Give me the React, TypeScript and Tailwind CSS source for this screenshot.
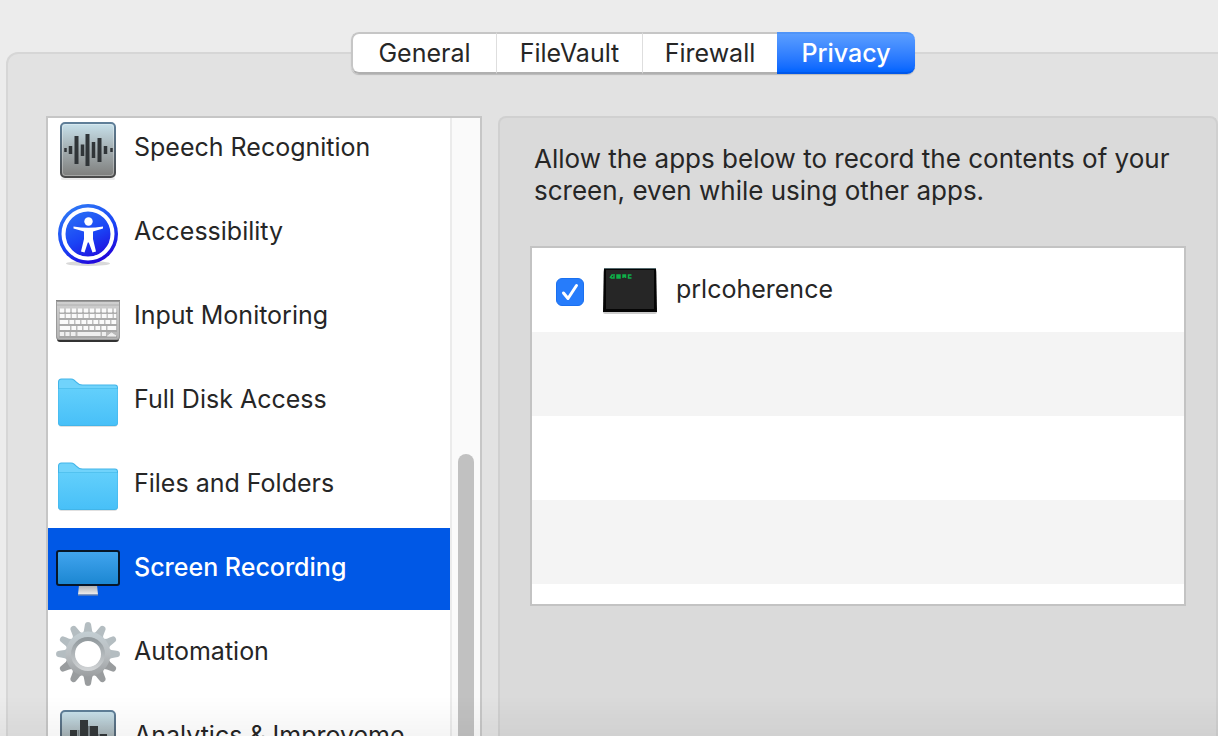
import { useState } from "react";
import clsx from "clsx";

const GEAR_TEETH = [0, 30, 60, 90, 120, 150, 180, 210, 240, 270, 300, 330];

const KEY_ROWS = [
  { y: 25.5, keys: "4 2" },
  { y: 31, keys: "4.5 1.5" },
  { y: 37, keys: "8 1.5 4.5 1.5 4.5 1.5 4.5 1.5 4.5 1.5 4.5 1.5 4.5 1.5 4.5 1.5" },
  { y: 43, keys: "10 1.5 4.5 1.5 4.5 1.5 4.5 1.5 4.5 1.5 4.5 1.5 4.5 1.5 9 1" },
];

function SpeechIcon() {
  return (
    <svg viewBox="0 0 64 64" className="size-16 shrink-0" aria-hidden="true">
      <defs>
        <linearGradient id="speech" x1="0" y1="0" x2="0" y2="1">
          <stop offset="0" stopColor="#c8e2ec" />
          <stop offset="0.5" stopColor="#a3adb0" />
          <stop offset="1" stopColor="#7d7d7b" />
        </linearGradient>
        <linearGradient id="speechEdge" x1="0" y1="0" x2="0" y2="1">
          <stop offset="0" stopColor="#5f7f99" />
          <stop offset="1" stopColor="#4a4a4a" />
        </linearGradient>
      </defs>
      <rect x="5" y="60" width="54" height="3" rx="1.5" fill="#000" opacity="0.08" />
      <rect x="5" y="6" width="54" height="54" rx="4" fill="url(#speech)" stroke="url(#speechEdge)" strokeWidth="2" />
      <rect x="6.5" y="7.5" width="51" height="51" rx="3" fill="none" stroke="#fff" strokeOpacity="0.3" />
      <g stroke="#303538">
        <path d="M9.5 31v4M55.5 31v4" strokeWidth="2.5" />
        <path d="M14.5 29v8M49.5 29v8M26.5 27.5v11.5" strokeWidth="3.5" />
        <path d="M20.500 19v28M31.500 17v32M43.500 21v24" strokeWidth="4" />
        <path d="M37.500 25v16" strokeWidth="3.5" />
      </g>
    </svg>
  );
}

function AccessibilityIcon() {
  return (
    <svg viewBox="0 0 64 64" className="size-16 shrink-0 overflow-visible" aria-hidden="true">
      <defs>
        <linearGradient id="access" x1="0.2" y1="0" x2="0.7" y2="1">
          <stop offset="0" stopColor="#2f7bf5" />
          <stop offset="0.55" stopColor="#1a44f5" />
          <stop offset="1" stopColor="#2200d8" />
        </linearGradient>
      </defs>
      <ellipse cx="32" cy="62.5" rx="22" ry="2.5" fill="#000" opacity="0.15" />
      <circle cx="32" cy="33" r="30" fill="url(#access)" />
      <circle cx="32" cy="33" r="24.5" fill="none" stroke="#fff" strokeWidth="4" />
      <circle cx="32.5" cy="20.5" r="4.2" fill="#fff" />
      <path
        d="M17.5 25.5Q32 28 47 25.5L47 27.5L37 30.5L37 38L40 50.500L36.500 51.500L32.800 41.500L31.800 41.500L28.500 51.500L25 50.500L28 38L28 30.500L17.500 27.500Z"
        fill="#fff"
      />
    </svg>
  );
}

function KeyboardIcon() {
  return (
    <svg viewBox="0 0 64 64" className="size-16 shrink-0" aria-hidden="true">
      <defs>
        <linearGradient id="keyboard" x1="0" y1="0" x2="0" y2="1">
          <stop offset="0" stopColor="#cfcfcf" />
          <stop offset="1" stopColor="#b4b4b4" />
        </linearGradient>
      </defs>
      <path d="M1 50h62v4q0 3-3 3H4q-3 0-3-3z" fill="#333" />
      <path d="M0 15h64v37q0 3-3 3H3q-3 0-3-3z" fill="#9a9a9a" />
      <path d="M1 17h62v34q0 3-3 3H4q-3 0-3-3z" fill="url(#keyboard)" />
      <path d="M0 15.5h64" stroke="#858585" />
      <path d="M1 20h62" stroke="#b0b0b0" />
      <g stroke="#959595" strokeWidth="1">
        <path d="M3 28h58M3 34h58M3 40h58M3 46h58M3 52h58" />
      </g>
      <g stroke="#fafafa" strokeWidth="3.8">
        {KEY_ROWS.map(({ y, keys }) => (
          <path key={y} d={`M4 ${y}H60`} strokeDasharray={keys} />
        ))}
        <path d="M4 49h4M9.5 49h4M15 49h4.500M21.500 49h23M46 49h4" stroke="#efefef" />
        <path d="M51.500 51L55.500 48L60 51z" fill="#efefef" stroke="#efefef" strokeWidth="1" />
      </g>
    </svg>
  );
}

function FolderIcon() {
  return (
    <svg viewBox="0 0 64 64" className="size-16 shrink-0" aria-hidden="true">
      <defs>
        <linearGradient id="folder" x1="0" y1="0" x2="0" y2="1">
          <stop offset="0" stopColor="#62cffb" />
          <stop offset="1" stopColor="#48c0f8" />
        </linearGradient>
      </defs>
      <rect x="3" y="54" width="58" height="4" rx="2" fill="#000" opacity="0.12" />
      <path
        d="M2 13q0-3.500 3.500-3.500H15q2 0 3.500 1.200L21 13q2.500 2.500 5.500 2.500H59q3 0 3 3V54q0 3-3 3H5q-3 0-3-3z"
        fill="#42b5e9"
      />
      <path d="M3 13q0-2.500 2.500-2.500H15q2 0 3 1.200L20.500 14q2.500 2.500 5.500 2.500H59q2 0 2 2V20H3z" fill="#70d3fb" />
      <path d="M2.500 20h59v33q0 3-3 3H5.500q-3 0-3-3z" fill="url(#folder)" />
      <path d="M3 19.500h58" stroke="#52c2ef" />
    </svg>
  );
}

function DisplayIcon() {
  return (
    <svg viewBox="0 0 64 64" className="size-16 shrink-0" aria-hidden="true">
      <defs>
        <linearGradient id="display" x1="0" y1="0" x2="0" y2="1">
          <stop offset="0" stopColor="#41a4ee" />
          <stop offset="1" stopColor="#1c87d2" />
        </linearGradient>
        <linearGradient id="stand" x1="0" y1="0" x2="0" y2="1">
          <stop offset="0" stopColor="#a9abad" />
          <stop offset="1" stopColor="#eeeeee" />
        </linearGradient>
      </defs>
      <path d="M23 48h18l1 9.500H22z" fill="url(#stand)" />
      <path d="M22 58h20" stroke="#8a8f99" />
      <rect x="0" y="13" width="64" height="36" rx="3" fill="#071629" />
      <rect x="2" y="15" width="60" height="32" rx="1" fill="url(#display)" />
    </svg>
  );
}

function GearIcon() {
  return (
    <svg viewBox="0 0 64 64" className="size-16 shrink-0 overflow-visible" aria-hidden="true">
      <defs>
        <linearGradient id="gear" x1="0" y1="0" x2="0" y2="1">
          <stop offset="0" stopColor="#c3ced3" />
          <stop offset="0.5" stopColor="#b9bec1" />
          <stop offset="1" stopColor="#9c9fa1" />
        </linearGradient>
        <linearGradient id="gearRing" x1="0" y1="0" x2="0" y2="1">
          <stop offset="0" stopColor="#929a9e" />
          <stop offset="1" stopColor="#cfd2d4" />
        </linearGradient>
      </defs>
      {GEAR_TEETH.map((angle) => (
        <path
          key={angle}
          d="M26 13Q28.500 10 28.500 6L29 3Q29.500 1 32 1T35 3L35.500 6Q35.500 10 38 13Z"
          transform={`rotate(${angle} 32 33)`}
          fill={angle > 90 && angle < 270 ? "#999c9e" : "#b4bdc1"}
        />
      ))}
      <path
        fill="url(#gear)"
        fillRule="evenodd"
        d="M32 10.500a22.500 22.500 0 1 0 0 45a22.500 22.500 0 1 0 0-45M32 19.500a13.500 13.500 0 1 1 0 27a13.500 13.500 0 1 1 0-27"
      />
      <circle cx="32" cy="33" r="15" fill="none" stroke="url(#gearRing)" strokeWidth="4" />
    </svg>
  );
}

function AnalyticsIcon() {
  return (
    <svg viewBox="0 0 64 64" className="size-16 shrink-0" aria-hidden="true">
      <rect x="5" y="6" width="54" height="54" rx="4" fill="url(#speech)" stroke="url(#speechEdge)" strokeWidth="2" />
      <path d="M14 25h7v29h-7zM24 15h8v39h-8zM34 21h8v33h-8zM44 29h7v25h-7z" fill="#34383a" />
      <path d="M22.500 25v29M33 21v33M43 29v25" stroke="#7c8589" strokeWidth="2" />
    </svg>
  );
}

function TerminalIcon() {
  return (
    <svg viewBox="0 0 56 48" className="h-12 w-14 shrink-0" aria-hidden="true">
      <rect x="1" y="4" width="54" height="44" rx="2" fill="#000" opacity="0.2" />
      <path d="M2 2h52L55 46H1z" fill="#050505" />
      <path d="M2 2.500h52" stroke="#54696d" />
      <path d="M4 4h48v39H4z" fill="#262626" />
      <path
        d="M8 12l2-3h3M9 12h3v-2M15 12V9h3v3zM15 10.500h3M21 12V9h2.500v3M21 10.500h3M29.500 9h-3v3h3"
        fill="none"
        stroke="#0fb048"
        strokeWidth="1.5"
      />
    </svg>
  );
}

const tabs = [
  { name: "General", width: "w-[145px]" },
  { name: "FileVault", width: "w-[146px]" },
  { name: "Firewall", width: "w-[135px]" },
  { name: "Privacy", width: "w-[138px]" },
];

const services = [
  { name: "Speech Recognition", icon: SpeechIcon },
  { name: "Accessibility", icon: AccessibilityIcon },
  { name: "Input Monitoring", icon: KeyboardIcon },
  { name: "Full Disk Access", icon: FolderIcon },
  { name: "Files and Folders", icon: FolderIcon },
  { name: "Screen Recording", icon: DisplayIcon },
  { name: "Automation", icon: GearIcon },
  { name: "Analytics & Improveme", icon: AnalyticsIcon },
];

function TabBar() {
  const [active, setActive] = useState("Privacy");

  return (
    <div role="tablist" className="relative z-10 flex h-[42px] rounded-lg bg-white shadow-[0_1px_1px_#0000002e]">
      {tabs.map(({ name, width }) => (
        <button
          key={name}
          type="button"
          role="tab"
          aria-selected={active === name}
          onClick={() => setActive(name)}
          className={clsx(
            "flex items-center justify-center border-y-2 first:rounded-l-lg first:border-l-2 last:rounded-r-lg",
            width,
            active === name
              ? "border-t-[#4f94f8] border-b-[#0058ea] bg-linear-to-b from-[#5a9dff] to-[#0064ff] font-medium text-white"
              : "border-[#c6c6c6] border-b-[#b0b0b0] text-[#262626] not-first:border-l not-first:border-l-[#dedede]"
          )}
        >
          {name}
        </button>
      ))}
    </div>
  );
}

function ServiceList() {
  const [selected, setSelected] = useState("Screen Recording");

  return (
    <div className="flex w-[436px] shrink-0 overflow-hidden border-2 border-b-0 border-[#c6c6c6] bg-white">
      <ul className="-mt-[10px] min-w-0 flex-1">
        {services.map(({ name, icon: Icon }) => (
          <li key={name} className="pb-0.5">
            <button
              type="button"
              onClick={() => setSelected(name)}
              className={clsx(
                "flex h-[82px] w-full items-center gap-3.5 pl-2 text-left",
                selected === name ? "bg-[#0058e6] font-medium text-white" : "text-[#262626]"
              )}
            >
              <Icon />
              <span className="pb-1 whitespace-nowrap">{name}</span>
            </button>
          </li>
        ))}
      </ul>
      <div className="w-[30px] border-l-2 border-[#ebebeb] bg-[#fafafa] px-1.5 pt-[336px]">
        <div className="h-full w-4 rounded-t-full bg-[#c1c1c1]" />
      </div>
    </div>
  );
}

function AppRow() {
  const [allowed, setAllowed] = useState(true);

  return (
    <label className="flex h-[84px] items-center pl-6">
      <span className="mt-1 grid size-7 shrink-0">
        <input
          type="checkbox"
          checked={allowed}
          onChange={(e) => setAllowed(e.target.checked)}
          className="col-start-1 row-start-1 size-7 appearance-none rounded-md border border-[#b5b5b5] bg-white checked:border-[#1a70f0] checked:bg-[#267cfb]"
        />
        {allowed && (
          <svg viewBox="0 0 28 28" className="pointer-events-none col-start-1 row-start-1 size-7" aria-hidden="true">
            <path d="M7.500 15L12 20.500L20.500 7.500" fill="none" stroke="#fff" strokeWidth="3" strokeLinecap="round" strokeLinejoin="round" />
          </svg>
        )}
      </span>
      <span className="mr-[18px] ml-[18px]">
        <TerminalIcon />
      </span>
      <span className="pb-0.5">prlcoherence</span>
    </label>
  );
}

export default function App() {
  return (
    <main className="flex h-screen flex-col overflow-hidden bg-[#ececec] pt-8 font-[Inter,'Liberation_Sans',sans-serif] text-[25px] leading-8 text-[#262626]">
      {/* the pane is wider than the window, so its right edge runs off screen */}
      <div className="-mr-[44px] ml-1.5 flex min-h-0 flex-1 flex-col items-center">
        <div className="pr-0.5">
          <TabBar />
        </div>
        <section className="-mt-[22px] flex min-h-0 w-full flex-1 gap-4 rounded-t-xl border-2 border-b-0 border-[#d6d6d6] bg-[#e2e2e2] pt-[62px] pr-[42px] pl-[38px]">
          <ServiceList />
          <div className="min-w-0 flex-1 rounded-t-lg border-2 border-b-0 border-[#d0d0d0] bg-[#dadada] px-[30px] pt-[25px]">
            <p className="pl-1 text-[26px] whitespace-nowrap">
              Allow the apps below to record the contents of your
              <br />
              screen, even while using other apps.
            </p>
            <div className="mt-[39px] border-2 border-[#c3c3c3] bg-white">
              <AppRow />
              <div className="h-[84px] bg-[#f4f4f4]" />
              <div className="h-[84px]" />
              <div className="h-[84px] bg-[#f4f4f4]" />
              <div className="h-5" />
            </div>
          </div>
        </section>
      </div>
      <div className="pointer-events-none fixed inset-x-0 bottom-0 z-20 h-10 bg-linear-to-b from-transparent to-black/4" />
    </main>
  );
}
